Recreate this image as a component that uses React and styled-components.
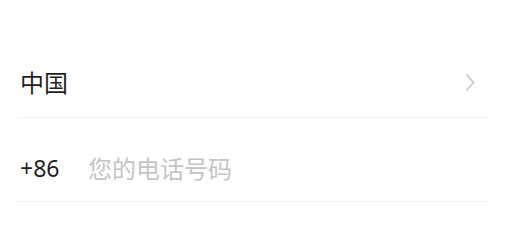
import React from "react";
import styled, { createGlobalStyle } from "styled-components";

const GlobalStyle = createGlobalStyle`
  html, body {
    margin: 0;
    padding: 0;
    background: #ffffff;
  }
  body {
    font-family: "Noto Sans", "Noto Sans CJK SC", sans-serif;
  }
`;

const Form = styled.div`
  padding: 32px 19px 0 17px;
`;

const Row = styled.div`
  display: flex;
  align-items: center;
  padding: ${(p) => (p.first ? "34px 13px 19px 3px" : "34px 13px 17px 3px")};
  border-bottom: 1px solid #f2f2f2;
  line-height: 32px;
  font-size: 24px;
  color: #1f1f1f;
`;

const Label = styled.span`
  flex: 1;
  font-family: "Noto Sans CJK SC", sans-serif;
`;

const Code = styled.span`
  width: 68px;
  font-size: 23px;
  font-family: "Noto Sans", "Noto Sans CJK SC", sans-serif;
`;

const PhoneInput = styled.input`
  flex: 1;
  border: none;
  outline: none;
  padding: 0;
  font-size: 24px;
  line-height: 32px;
  font-family: "Noto Sans CJK SC", sans-serif;
  color: #1f1f1f;
  background: transparent;
  &::placeholder {
    color: #c4c4c4;
  }
`;

const Chevron = () => (
  <svg width="10" height="19" viewBox="0 0 10 19" fill="none">
    <path d="M1.5 1.5 L8.5 9.5 L1.5 17.5" stroke="#c6c6c6" strokeWidth="1.6" />
  </svg>
);

export default function App() {
  return (
    <>
      <GlobalStyle />
      <Form>
        <Row first>
          <Label>中国</Label>
          <Chevron />
        </Row>
        <Row>
          <Code>+86</Code>
          <PhoneInput placeholder="您的电话号码" />
        </Row>
      </Form>
    </>
  );
}
